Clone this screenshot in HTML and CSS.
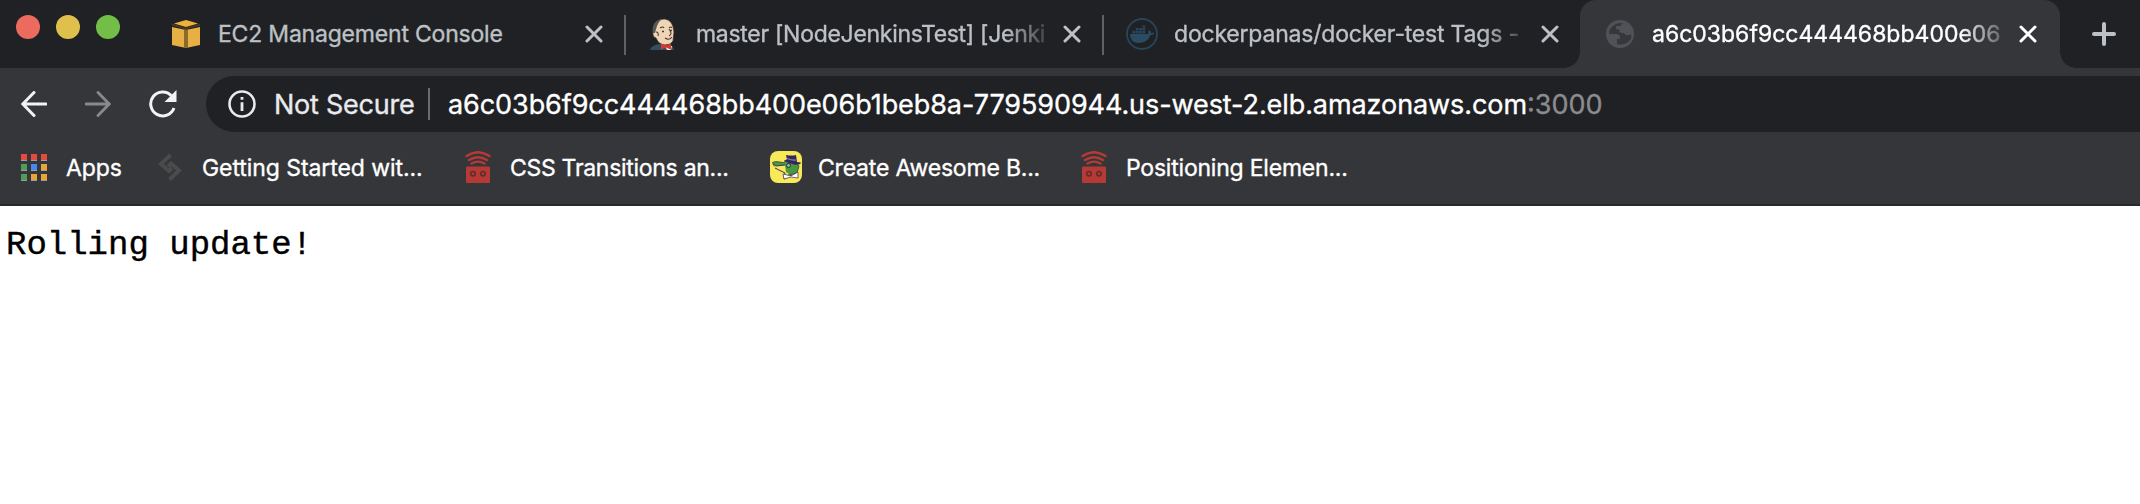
FILE: index.html
```html
<!DOCTYPE html>
<html lang="en">
<head>
<meta charset="utf-8">
<title>Rolling update</title>
<link rel="stylesheet" href="styles.css">
</head>
<body>
<svg class="defs" width="0" height="0" aria-hidden="true">
  <symbol id="close" viewBox="0 0 18 18"><path d="M2 2l14 14M16 2L2 16" fill="none" stroke="currentColor" stroke-width="3" stroke-linecap="round"/></symbol>
  <symbol id="robot" viewBox="0 0 26 32">
    <path d="M1.500 5Q13-2.600 24.500 5M4 9Q13 3.400 22 9M6.500 12.500Q13 8.700 19.500 12.500" fill="none" stroke="#b53a35" stroke-width="2.400" stroke-linecap="round"/>
    <rect x="1" y="15.500" width="24" height="16.500" rx="1" fill="#b53a35"/>
    <g fill="#b53a35" stroke="#642c2d" stroke-width="1.700"><circle cx="8" cy="22.700" r="2.200"/><circle cx="18" cy="22.700" r="2.200"/></g>
  </symbol>
</svg>
<header class="tabs">
  <div class="lights"><i class="red"></i><i class="yellow"></i><i class="green"></i></div>
  <div class="tab tab-ec2">
    <svg class="fav" viewBox="0 0 28 28"><path d="M0 7l14 3v18L0 25zM14 10l14-3v18l-14 3z" fill="#e8b044"/><path d="M12 9.500h4V28h-4z" fill="#8b6b2c"/><path d="M2 3.500L14 0l12 3.500L14 7z" fill="#f0b13b"/><path d="M0 4.500l14 4 14-4" fill="none" stroke="#493c22" stroke-width="1.800"/></svg>
    <span class="title t1">EC2 Management Console</span><svg class="close"><use href="#close"/></svg>
  </div>
  <i class="sep"></i>
  <div class="tab tab-jenkins">
    <svg class="fav wide" viewBox="0 0 32 32">
      <path d="M2 32q1-5 10-6h9q4 1 5 6z" fill="#31505f"/>
      <path d="M5 12Q7 0 17 1q8 1 9 13l-1 9q-2 4-8 4-6 0-9-7-4-1-3-8z" fill="#efd5b5" stroke="#39332e" stroke-width=".8"/>
      <path d="M5 15Q3 3 14 1q-4 3-5 7l-2 7z" fill="#5b5754"/>
      <path d="M12 10q3-2 4 0M21 10q2-2 3 0M21 11q4 5 0 7M17 20q4 3 7-1M8 14q3 0 2 4" fill="none" stroke="#4b3b33" stroke-width="1.100"/><path d="M14 13.500h2M22 12.500h2" stroke="#4b3b33" stroke-width="1.500"/>
      <path d="M17 28l2 4h4l1-4z" fill="#e7e5df"/><path d="M13 25.500l5 2 5-2v6l-5-2-5 2z" fill="#d8372d"/>
    </svg>
    <span class="title t2 fade">master [NodeJenkinsTest] [Jenki</span><svg class="close"><use href="#close"/></svg>
  </div>
  <i class="sep"></i>
  <div class="tab tab-docker">
    <svg class="fav wide" viewBox="0 0 32 32"><circle cx="16" cy="16" r="15" fill="none" stroke="#27455b" stroke-width="1.800"/><path d="M4 16h18.500q-1-2 .5-4 2 1 2 3 2-1 3.500 0-1 2-4 2-3 8-12 8-8 0-8.500-9z" fill="#2b4b62"/><path d="M6.500 12.700h2.800v2.800H6.500zM9.800 12.700h2.800v2.800H9.800zM13.100 12.700h2.800v2.800h-2.800zM16.400 12.700h2.800v2.800h-2.800zM9.800 9.900h2.800v2.400H9.800zM13.100 9.900h2.800v2.400h-2.800zM16.400 9.900h2.800v2.400h-2.800zM16.400 7.500h2.800v2h-2.800z" fill="#28465c"/></svg>
    <span class="title t3 fade">dockerpanas/docker-test Tags -</span><svg class="close"><use href="#close"/></svg>
  </div>
  <div class="tab tab-active">
    <svg class="fav" viewBox="0 0 28 28"><circle cx="14" cy="14" r="14" fill="#505257"/><path d="M17 3Q9 2 4 9q-1 2-1 5h7q4 0 4 3v2h-3v5q8 2 13-4 2-2 1-6-3 2-5 1-2-2-4-2l-3-1 1-2-4-1v-3h4l2-2z" fill="#36373b"/></svg>
    <span class="title t4 fade">a6c03b6f9cc444468bb400e06</span><svg class="close"><use href="#close"/></svg>
  </div>
  <svg class="plus" viewBox="0 0 24 24"><path d="M12 2v20M2 12h20" stroke="#bdc1c6" stroke-width="4" stroke-linecap="round"/></svg>
</header>
<nav class="toolbar">
  <svg class="nav" viewBox="0 0 26 26"><path d="M25 13H2M13 1.500L1.800 13 13 24.500" fill="none" stroke="#f1f3f4" stroke-width="3" stroke-linecap="round"/></svg>
  <svg class="nav" viewBox="0 0 26 26"><path d="M1 13h23M13 1.500L24.200 13 13 24.500" fill="none" stroke="#88898b" stroke-width="2.800" stroke-linecap="round"/></svg>
  <svg class="nav reload" viewBox="0 0 28 28"><path d="M22.500 5.700A12 12 0 1 0 25 18" fill="none" stroke="#f1f3f4" stroke-width="3"/><path d="M27.500 0v12h-12z" fill="#f1f3f4"/></svg>
  <div class="address">
    <svg class="info" viewBox="0 0 28 28"><circle cx="14" cy="14" r="12.500" fill="none" stroke="#e8eaed" stroke-width="2.600"/><path d="M12.600 7h2.800v2.800h-2.800zM12.600 12.300h2.800v8.700h-2.800z" fill="#e8eaed"/></svg>
    <span class="secure">Not Secure</span><i class="divider"></i>
    <span class="url">a6c03b6f9cc444468bb400e06b1beb8a-779590944.us-west-2.elb.amazonaws.com</span><span class="port">:3000</span>
  </div>
</nav>
<nav class="bookmarks">
  <svg class="apps" viewBox="0 0 26 27"><g fill="#999ca0"><path d="M0 1h6v6H0zM10 1h6v6h-6zM20 1h6v6h-6zM0 11h6v6H0zM10 11h6v6h-6zM20 11h6v6h-6zM0 21h6v6H0zM10 21h6v6h-6zM20 21h6v6h-6z"/></g><path d="M0 0h6v6H0zM10 0h6v6h-6zM20 0h6v6h-6z" fill="#e44b3d"/><path d="M0 10h6v6H0zM0 20h6v6H0z" fill="#519b5b"/><path d="M10 10h6v6h-6z" fill="#4688f1"/><path d="M20 10h6v6h-6zM10 20h6v6h-6zM20 20h6v6h-6z" fill="#e8a436"/></svg>
  <span class="b0">Apps</span>
  <svg class="site" viewBox="0 0 24 28"><path d="M12.500 2L3 11l8 7 3-3M10 13.500l3-3 8 7-9.500 9" fill="none" stroke="#4b4b4b" stroke-width="4"/></svg>
  <span class="b1">Getting Started wit...</span>
  <svg class="robot"><use href="#robot"/></svg>
  <span class="b2">CSS Transitions an...</span>
  <svg class="croc" viewBox="0 0 32 32"><rect width="32" height="32" rx="8" fill="#f7e957"/><path d="M2.500 11.500l3-1 8 1 3-2.500 10 3 2.500 3-2 7-8 2-5-2-10-7z" fill="#47983f" stroke="#344434" stroke-width=".8"/><path d="M3 13l3 2 9-1 1 7 3 2-4 3-2-3-6-3z" fill="#f8e65d"/><path d="M3 13l3 2 9-1M5 17l10 5-1 6 8-4" fill="none" stroke="#3b3165" stroke-width="1"/><path d="M16 4q6 1 10 0l1 7 4 .5q-1 3-7 2-6-1-10-4l3-1z" fill="#35265f"/><path d="M17 7.500q5 2 9 1.500" fill="none" stroke="#8c83ac" stroke-width="1.200"/><circle cx="18.500" cy="14.500" r="2" fill="#8ac06a" stroke="#35265f"/><path d="M14 28l-1-5 8 2 7-4v6l-7-1z" fill="#fff" stroke="#35265f" stroke-width=".7"/></svg>
  <span class="b3">Create Awesome B...</span>
  <svg class="robot"><use href="#robot"/></svg>
  <span class="b4">Positioning Elemen...</span>
</nav>
<main><pre>Rolling update!</pre></main>
</body>
</html>
```
FILE: styles.css
```css
* { box-sizing: border-box; }
body { margin: 0; width: 2140px; height: 504px; overflow: hidden; background: #fff; font-family: Inter, "Liberation Sans", sans-serif; }
.defs { position: absolute; }
svg, span, i { flex-shrink: 0; }
span { white-space: pre; line-height: 32px; -webkit-text-stroke: .35px currentColor; }
.tabs { display: flex; height: 68px; background: #202124; align-items: center; }
.lights { display: flex; gap: 16px; width: 156px; padding-left: 16px; margin-top: -14px; }
.lights i { width: 24px; height: 24px; border-radius: 50%; }
.red { background: #ed6a5e; }
.yellow { background: #e0c04c; }
.green { background: #72be47; }
.tab { display: flex; align-items: center; height: 68px; color: #bdc1c6; font-size: 23px; }
.tab-ec2 { width: 468px; padding-left: 16px; }
.tab-jenkins { width: 476px; padding-left: 22px; }
.tab-docker { width: 476px; padding-left: 22px; }
.tab-active { position: relative; width: 480px; padding-left: 26px; background: #35363a; border-radius: 16px 16px 0 0; color: #fff; }
.tab-active::before, .tab-active::after { content: ""; position: absolute; bottom: 0; width: 16px; height: 16px; }
.tab-active::before { left: -16px; background: radial-gradient(circle at 0 0, transparent 15.500px, #35363a 16px); }
.tab-active::after { right: -16px; background: radial-gradient(circle at 100% 0, transparent 15.500px, #35363a 16px); }
.fav { width: 28px; height: 28px; margin-right: 18px; }
.fav.wide { width: 32px; height: 32px; margin-right: 16px; }
.title { width: 350px; margin-right: 17px; }
.t1 { letter-spacing: -.2px; }
.t2 { letter-spacing: -.29px; }
.t3 { letter-spacing: -.2px; }
.t4 { letter-spacing: 0; }
.fade { -webkit-mask-image: linear-gradient(90deg, #000 308px, transparent 362px); mask-image: linear-gradient(90deg, #000 308px, transparent 362px); }
.close { width: 18px; height: 18px; }
.sep { width: 2px; height: 40px; background: #5f6165; margin-top: 2px; }
.plus { width: 24px; height: 24px; margin-left: 32px; }
.toolbar { display: flex; height: 64px; align-items: center; padding: 8px 0 0 21px; background: #35363a; }
.nav { width: 26px; height: 26px; margin-right: 38px; }
.reload { width: 28px; height: 28px; margin-right: 29px; }
.address { display: flex; flex: 1; align-items: center; height: 56px; padding-left: 22px; background: #202124; border-radius: 28px 0 0 28px; font-size: 27px; color: #fff; }
.address span { padding-top: 1px; }
.info { width: 28px; height: 28px; margin-right: 18px; }
.secure { width: 154px; color: #e8eaed; letter-spacing: -.25px; }
.divider { width: 2px; height: 32px; margin-right: 18px; background: #696b6f; }
.url { letter-spacing: -.08px; }
.port { color: #8b8c8e; }
.bookmarks { display: flex; height: 74px; align-items: center; padding: 0 0 2px 21px; background: #35363a; border-bottom: 2px solid #28292b; color: #fff; font-size: 23px; }
.bookmarks span { padding-top: 2px; }
.apps { width: 26px; height: 27px; margin-right: 19px; }
.b0 { width: 92px; letter-spacing: -.1px; }
.site { width: 24px; height: 28px; margin-right: 20px; }
.b1 { width: 263px; letter-spacing: -.07px; }
.robot { width: 26px; height: 32px; margin-right: 19px; }
.b2 { width: 260px; letter-spacing: -.29px; }
.croc { width: 32px; height: 32px; margin-right: 16px; }
.b3 { width: 263px; letter-spacing: -.2px; }
.b4 { letter-spacing: -.21px; }
main { padding: 19px 6px; }
pre { margin: 0; font: 34px/40px "Liberation Mono", monospace; color: #000; -webkit-text-stroke: .4px #000; }
```
